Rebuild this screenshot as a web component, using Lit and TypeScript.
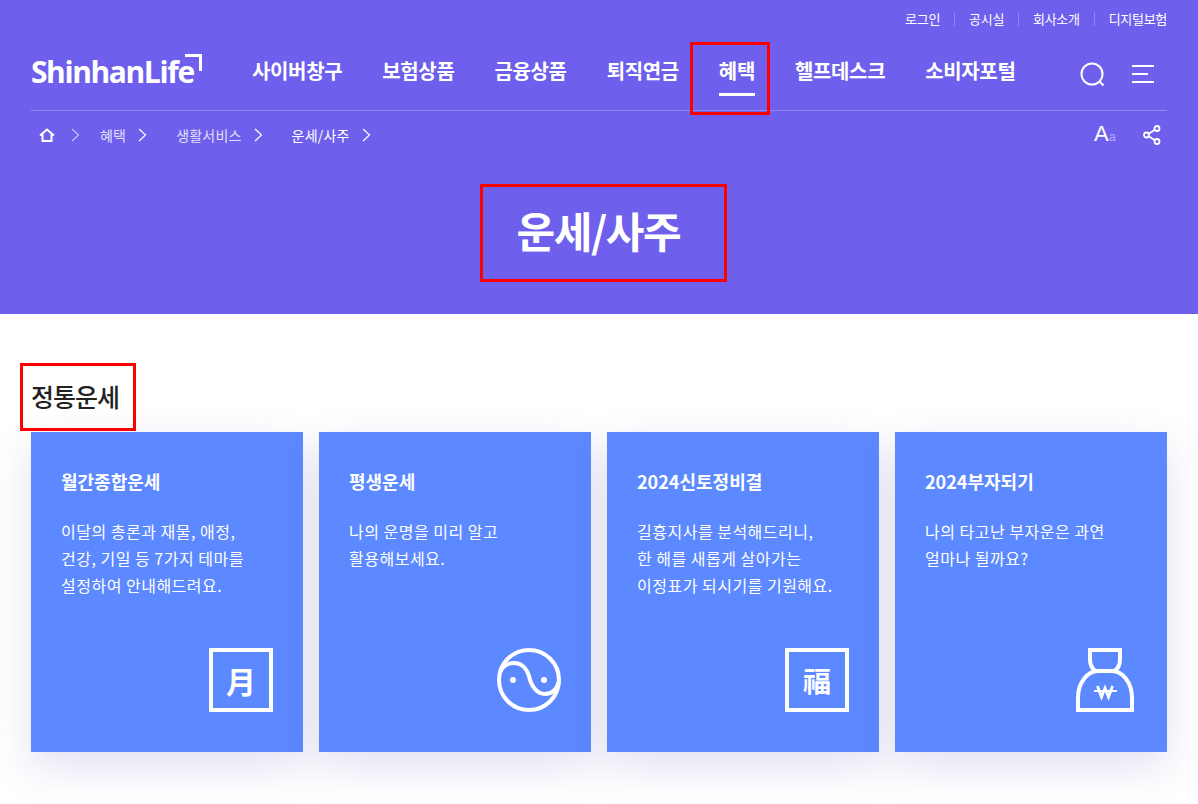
import { LitElement, html, css, svg } from "lit";
import { customElement } from "lit/decorators.js";

const topLinks = ["로그인", "공시실", "회사소개", "디지털보험"];
const navItems = ["사이버창구", "보험상품", "금융상품", "퇴직연금", "혜택", "헬프데스크", "소비자포털"];

const chevron = svg`<svg class="chev" width="9" height="14" viewBox="0 0 9 14" fill="none" stroke="currentColor" stroke-width="1.2"><path d="M1 1l6.500 6L1 13"/></svg>`;

const cards = [
  {
    title: "월간종합운세",
    lines: ["이달의 총론과 재물, 애정,", "건강, 기일 등 7가지 테마를", "설정하여 안내해드려요."],
    icon: html`<span class="stamp">月</span>`,
  },
  {
    title: "평생운세",
    lines: ["나의 운명을 미리 알고", "활용해보세요."],
    icon: html`<svg width="64" height="64" viewBox="0 0 64 64" fill="none" stroke="#fff" stroke-width="4">
      <circle cx="32" cy="32" r="30" />
      <path d="M3 24C6 18 11 15 17 15c8 0 13 6 15 13 2 10 8 18 16 18 7 0 12-5 14-13" />
      <circle cx="16" cy="32" r="3" fill="#fff" stroke="none" />
      <circle cx="47" cy="32" r="3" fill="#fff" stroke="none" />
    </svg>`,
  },
  {
    title: "2024신토정비결",
    lines: ["길흉지사를 분석해드리니,", "한 해를 새롭게 살아가는", "이정표가 되시기를 기원해요."],
    icon: html`<span class="stamp small">福</span>`,
  },
  {
    title: "2024부자되기",
    lines: ["나의 타고난 부자운은 과연", "얼마나 될까요?"],
    icon: html`<svg width="58" height="64" viewBox="0 0 58 64" fill="none" stroke="#fff" stroke-width="4">
      <path d="M14 2h30v9c0 6-2 10-6 12H20c-4-2-6-6-6-12z" />
      <path d="M2 62V50C2 34 12 23 22 23h14c10 0 20 11 20 27v12z" />
      <path d="M21.500 38l4 11 3.500-9 3.500 9 4-11" stroke-width="2.800" />
      <path d="M18 43h23" stroke-width="2" />
    </svg>`,
  },
];

@customElement("app-root")
export class AppRoot extends LitElement {
  static styles = css`
    :host {
      display: block;
      font-family: "Noto Sans CJK KR", "Noto Sans", sans-serif;
      color: #222;
      background: #fff;
      height: 804px;
      overflow: hidden;
    }
    .hero {
      height: 314px;
      background: #6e5fec;
      color: #fff;
      padding: 0 31px;
      box-sizing: border-box;
    }
    .top {
      display: flex;
      justify-content: flex-end;
      align-items: center;
      height: 38px;
      font-size: 13px;
      letter-spacing: -0.3px;
    }
    .top span {
      line-height: 14px;
    }
    .top span + span {
      margin-left: 14px;
      padding-left: 14px;
      border-left: 1px solid rgba(255, 255, 255, 0.25);
    }
    .main {
      display: flex;
      align-items: center;
      height: 72px;
      border-bottom: 1px solid rgba(255, 255, 255, 0.25);
    }
    .logo {
      position: relative;
      width: 221px;
      flex: none;
      font-family: "Open Sans", sans-serif;
      font-size: 30px;
      font-weight: 700;
      letter-spacing: -1.4px;
      line-height: 36px;
      height: 36px;
      margin-top: -4px;
    }
    .logo i {
      position: absolute;
      left: 154px;
      top: 0;
      width: 14px;
      height: 14px;
      border-top: 3px solid #fff;
      border-right: 3px solid #fff;
    }
    nav {
      display: flex;
      gap: 40px;
      flex: 1;
      font-size: 20px;
      font-weight: 700;
      letter-spacing: -0.35px;
      margin-top: -6px;
    }
    nav a {
      position: relative;
      white-space: nowrap;
      line-height: 26px;
    }
    nav a.on::before {
      content: "";
      position: absolute;
      left: 0;
      right: 0;
      bottom: -12px;
      height: 3px;
      background: #fff;
    }
    nav a.on::after {
      content: "";
      position: absolute;
      left: -29px;
      right: -15px;
      top: -16px;
      bottom: -31px;
      border: 3px solid #f00;
    }
    .tools {
      display: flex;
      gap: 27px;
      align-items: center;
      padding-right: 13px;
    }
    .crumbs {
      display: flex;
      align-items: center;
      height: 48px;
      font-size: 14px;
      letter-spacing: 0.2px;
      padding-left: 8px;
    }
    .crumbs .dim {
      opacity: 0.8;
    }
    .chev {
      margin: 0 29px 0 12px;
      flex: none;
    }
    .crumbs .chev.first {
      margin: 0 20px 0 16px;
      opacity: 0.6;
    }
    .crumbs .tail {
      margin-left: auto;
      display: flex;
      align-items: center;
      gap: 27px;
      padding-right: 6px;
    }
    .aa {
      font-family: "Liberation Sans", sans-serif;
      font-size: 22px;
      line-height: 24px;
      width: 22px;
      white-space: nowrap;
    }
    .aa small {
      font-size: 12px;
      opacity: 0.5;
    }
    .title {
      display: flex;
      justify-content: center;
      margin-top: 25px;
    }
    .title h1 {
      position: relative;
      margin: 0;
      font-size: 42px;
      line-height: 86px;
      font-weight: 700;
      letter-spacing: -1.4px;
      box-sizing: border-box;
      width: 247px;
      height: 98px;
      padding-left: 34px;
      border: 3px solid #f00;
      white-space: nowrap;
      transform: translateX(4px);
    }
    .body {
      padding: 49px 31px 0;
    }
    h2 {
      position: relative;
      margin: 0 0 1px;
      height: 68px;
      line-height: 66px;
      font-size: 25px;
      font-weight: 500;
      letter-spacing: -1px;
      color: #222;
    }
    h2::after {
      content: "";
      position: absolute;
      left: -11px;
      top: 0;
      width: 116px;
      height: 68px;
      box-sizing: border-box;
      border: 3px solid #f00;
    }
    .cards {
      display: grid;
      grid-template-columns: repeat(4, 272px);
      gap: 16px;
    }
    .card {
      position: relative;
      height: 320px;
      box-sizing: border-box;
      padding: 35px 30px;
      background: #5c89ff;
      color: #fff;
      box-shadow: 0 15px 40px rgba(70, 50, 170, 0.15);
    }
    .card h3 {
      margin: 0 0 23px;
      font-size: 18px;
      line-height: 28px;
      font-weight: 700;
      letter-spacing: 0;
    }
    .card p {
      margin: 0;
      font-size: 16px;
      line-height: 27px;
      letter-spacing: 0.5px;
    }
    .icon {
      position: absolute;
      right: 30px;
      bottom: 40px;
      display: flex;
    }
    .card:nth-child(4) .icon {
      right: 33px;
    }
    .stamp {
      width: 64px;
      height: 64px;
      box-sizing: border-box;
      border: 4px solid #fff;
      display: flex;
      align-items: center;
      justify-content: center;
      font-size: 30px;
      font-weight: 700;
    }
    .stamp.small {
      font-size: 28px;
    }
  `;

  render() {
    return html`
      <header class="hero">
        <div class="top">${topLinks.map((t) => html`<span>${t}</span>`)}</div>
        <div class="main">
          <div class="logo">ShinhanLife<i></i></div>
          <nav>
            ${navItems.map((n) => html`<a class=${n === "혜택" ? "on" : ""}>${n}</a>`)}
          </nav>
          <div class="tools">
            <svg width="25" height="25" viewBox="0 0 25 25" fill="none" stroke="#fff" stroke-width="2">
              <circle cx="12" cy="12" r="10.500" />
              <path d="M19.500 19.500l4 4" />
            </svg>
            <svg width="22" height="18" viewBox="0 0 22 18" fill="none" stroke="#fff" stroke-width="2">
              <path d="M0 1h22M0 9h16M0 17h22" />
            </svg>
          </div>
        </div>
        <div class="crumbs">
          <svg width="16" height="14" viewBox="0 0 16 14" fill="none" stroke="#fff" stroke-width="2">
            <path d="M1 7.500L8 1.500l7 6M3.500 6v7h9V6" />
          </svg>
          <svg class="chev first" width="9" height="14" viewBox="0 0 9 14" fill="none" stroke="currentColor" stroke-width="1.200"><path d="M1 1l6.500 6L1 13" /></svg>
          <span class="dim">혜택</span>${chevron}
          <span class="dim">생활서비스</span>${chevron}
          <span>운세/사주</span>${chevron}
          <div class="tail">
            <span class="aa">A<small>a</small></span>
            <svg width="18" height="20" viewBox="0 0 18 20" fill="none" stroke="#fff" stroke-width="1.800">
              <circle cx="14" cy="3.500" r="2.500" />
              <circle cx="3.500" cy="10" r="2.500" />
              <circle cx="14" cy="16.500" r="2.500" />
              <path d="M5.700 8.700l6.200-4M5.700 11.300l6.200 4" />
            </svg>
          </div>
        </div>
        <div class="title"><h1>운세/사주</h1></div>
      </header>
      <section class="body">
        <h2>정통운세</h2>
        <div class="cards">
          ${cards.map(
            (c) => html`<article class="card">
              <h3>${c.title}</h3>
              <p>${c.lines.map((l) => html`${l}<br />`)}</p>
              <div class="icon">${c.icon}</div>
            </article>`
          )}
        </div>
      </section>
    `;
  }
}
